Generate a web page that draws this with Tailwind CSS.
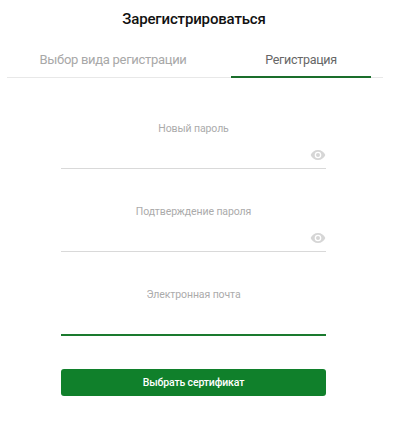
<!DOCTYPE html>
<html lang="ru">
<head>
    <meta charset="UTF-8">
    <title>Зарегистрироваться</title>
    <script src="https://cdn.jsdelivr.net/npm/@tailwindcss/browser@4"></script>
</head>
<body class="bg-white font-['Roboto',sans-serif]">
    <div class="w-[410px] h-[429px] overflow-hidden">
        <h1 class="pt-[7px] w-[388px] text-center text-[15px] leading-[24px] font-medium tracking-[-0.15px] text-[#111]">Зарегистрироваться</h1>

        <!-- Вкладки -->
        <div class="mt-[14px] ml-[7px] w-[376px] h-[33px] flex border-b border-[#e8e8e8]">
            <div class="w-[224px] pt-[5px] pr-[12px] text-center text-[13px] leading-[20px] tracking-[-0.3px] text-[#a8a8a8]">Выбор вида регистрации</div>
            <div class="w-[140px] h-[33px] pt-[5px] text-center text-[12.5px] leading-[20px] tracking-[-0.3px] text-[#666] border-b-2 border-[#1a6e2b]">Регистрация</div>
        </div>

        <form class="ml-[61px] w-[265px] mt-[42px]">
            <div class="h-[49px] border-b border-[#d9d9d9] flex flex-col">
                <label class="pt-[1px] text-center text-[10.5px] leading-[16px] tracking-[-0.1px] text-[#ababab]">Новый пароль</label>
                <div class="flex justify-end pt-[10px]">
                    <svg class="w-[16px] h-[16px]" viewBox="0 0 24 24" fill="#d6d6d6"><path d="M12 4.5C7 4.500 2.700 7.600 1 12c1.700 4.400 6 7.500 11 7.500s9.300-3.100 11-7.500c-1.700-4.400-6-7.500-11-7.500zM12 17a5 5 0 1 1 0-10 5 5 0 0 1 0 10zm0-8a3 3 0 1 0 0 6 3 3 0 0 0 0-6z"/></svg>
                </div>
            </div>
            <div class="mt-[34px] h-[49px] border-b border-[#d9d9d9] flex flex-col">
                <label class="pt-[1px] text-center text-[10.5px] leading-[16px] tracking-[-0.1px] text-[#ababab]">Подтверждение пароля</label>
                <div class="flex justify-end pt-[10px]">
                    <svg class="w-[16px] h-[16px]" viewBox="0 0 24 24" fill="#d6d6d6"><path d="M12 4.5C7 4.500 2.700 7.600 1 12c1.700 4.400 6 7.500 11 7.500s9.300-3.100 11-7.500c-1.700-4.400-6-7.500-11-7.500zM12 17a5 5 0 1 1 0-10 5 5 0 0 1 0 10zm0-8a3 3 0 1 0 0 6 3 3 0 0 0 0-6z"/></svg>
                </div>
            </div>
            <div class="mt-[34px] h-[50px] border-b-2 border-[#1a7a2e]">
                <label class="block pt-[1px] text-center text-[10.5px] leading-[16px] tracking-[-0.1px] text-[#ababab]">Электронная почта</label>
            </div>
            <button type="button" class="mt-[33px] w-full h-[27px] rounded-[3px] bg-[#10802b] text-white text-[10.5px] tracking-[-0.15px] font-medium">Выбрать сертификат</button>
        </form>
    </div>
</body>
</html>
